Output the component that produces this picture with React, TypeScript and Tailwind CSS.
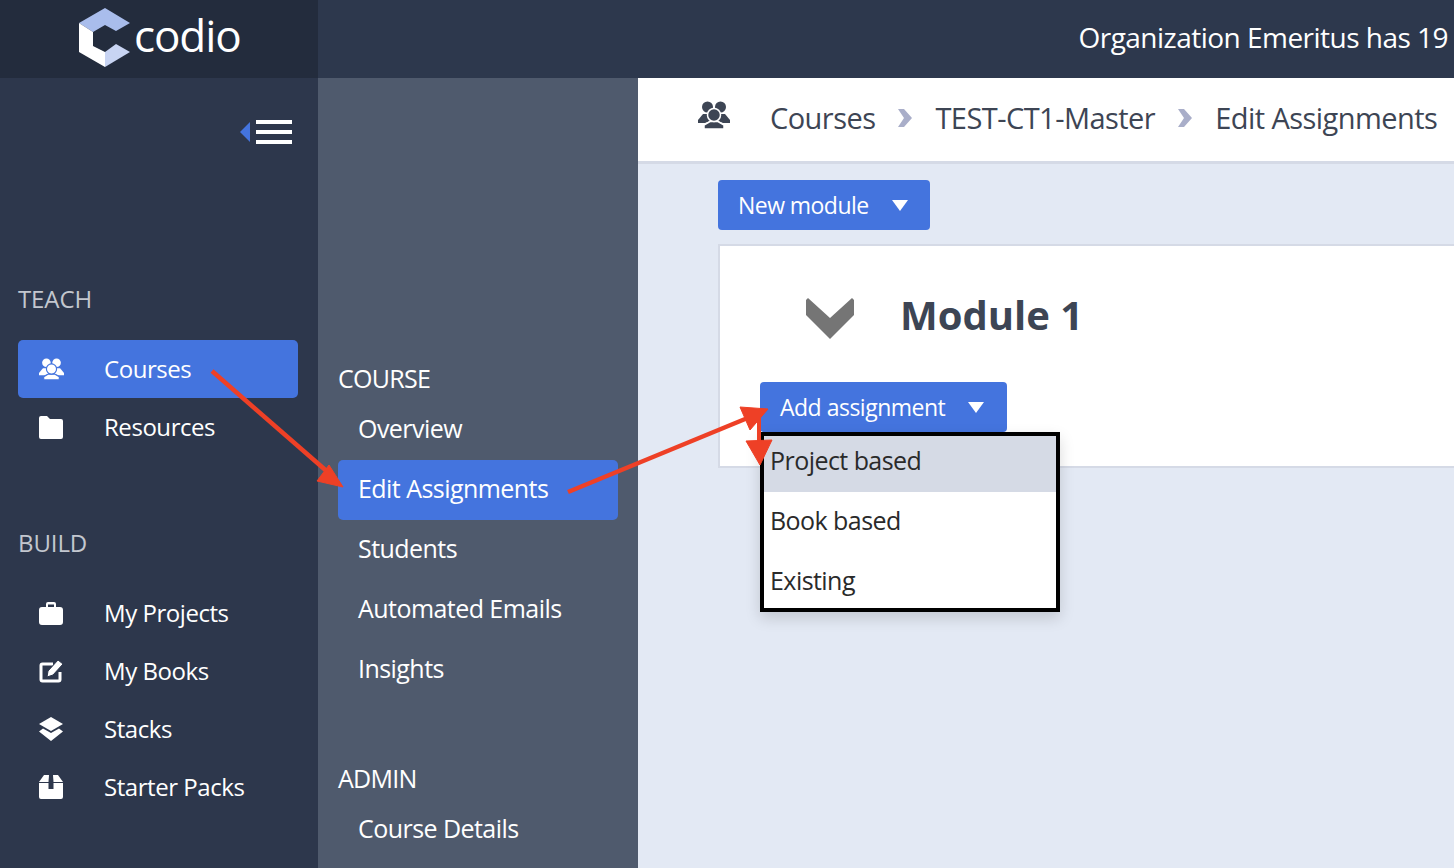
import type { ReactNode } from 'react';

function UsersIcon({ className, gap }: { className: string; gap: string }) {
  return (
    <svg viewBox="0 0 32 28" className={className} fill="currentColor">
      <circle cx="9.500" cy="6" r="5.500" />
      <circle cx="22.500" cy="6" r="5.500" />
      <path d="M0 19 5 13 10 13 12 20 7 22H0Z" />
      <path d="M32 19 27 13 22 13 20 20 25 22H32Z" />
      <path d="M6 28V24L12 20.500H20L26 24V28Z" stroke={gap} strokeWidth="1.500" />
      <circle cx="16" cy="14" r="6.500" stroke={gap} strokeWidth="1.500" />
    </svg>
  );
}

function FolderIcon() {
  return (
    <svg viewBox="0 0 24 23" className="w-[24px] h-[23px]" fill="currentColor">
      <path d="M0 2a2 2 0 0 1 2-2h6l3 3h11a2 2 0 0 1 2 2v16a2 2 0 0 1-2 2H2a2 2 0 0 1-2-2Z" />
    </svg>
  );
}

function BriefcaseIcon() {
  return (
    <svg viewBox="0 0 24 23" className="w-[24px] h-[23px]" fill="currentColor">
      <path fillRule="evenodd" d="M7 5V2a2 2 0 0 1 2-2h6a2 2 0 0 1 2 2v3h4a3 3 0 0 1 3 3v12a3 3 0 0 1-3 3H3a3 3 0 0 1-3-3V8a3 3 0 0 1 3-3ZM9 5h6V2.500H9Z" />
    </svg>
  );
}

function EditIcon() {
  return (
    <svg viewBox="0 0 25 24" className="w-[25px] h-[24px]" fill="currentColor">
      <path d="M21 13v7.500a1.500 1.500 0 0 1-1.500 1.500H3.500A1.500 1.500 0 0 1 2 20.500V6.500A1.500 1.500 0 0 1 3.500 5H14" fill="none" stroke="currentColor" strokeWidth="3" />
      <path d="M19 1 24 5 14 16 8 18 9 12Z" stroke="#2d374c" strokeWidth="1" />
    </svg>
  );
}

function StacksIcon() {
  return (
    <svg viewBox="0 0 24 24" className="w-[24px] h-[24px]" fill="currentColor">
      <path d="M12 0 24 7 12 14 0 7Z" />
      <path d="M4 11.500 12 16 20 11.500 24 14.500 12 24 0 14.500Z" />
    </svg>
  );
}

function BoxIcon() {
  return (
    <svg viewBox="0 0 24 24" className="w-[24px] h-[24px]" fill="currentColor">
      <path d="M5 0H10L9.500 7H0Z" />
      <path d="M19 0H14L14.500 7H24Z" />
      <path d="M0 8H9.500V14H14.500V8H24V22a2 2 0 0 1-2 2H2a2 2 0 0 1-2-2Z" />
    </svg>
  );
}

function Logo() {
  return (
    <div className="h-[78px] w-[318px] shrink-0 bg-[#232c3d] flex items-start pl-[79px] pt-[8px]">
      <svg viewBox="0 0 52 60" className="w-[52px] h-[60px] shrink-0">
        <path d="M0 15 26 0 51 15 37 23 26 17 14 24Z" fill="#a9bdec" />
        <path d="M0 15 14 24V38L26 44V59L0 44Z" fill="#ffffff" />
        <path d="M26 44 37 36 51 44 26 59Z" fill="#c8d4f3" />
      </svg>
      <span className="ml-[3px] mt-[1px] text-[44px] leading-[52px] font-medium text-white tracking-[-1.1px]">codio</span>
    </div>
  );
}

function SideItem({ icon, label, active }: { icon: ReactNode; label: string; active?: boolean }) {
  return (
    <div className={`h-[58px] w-[280px] rounded-[5px] flex items-center text-white ${active ? 'bg-[#4474de]' : ''}`}>
      <div className="w-[66px] flex justify-center shrink-0">{icon}</div>
      <span className="ml-[20px] text-[24px] tracking-[-0.45px]">{label}</span>
    </div>
  );
}

function SubItem({ label, active }: { label: string; active?: boolean }) {
  return (
    <div className={`h-[60px] w-[280px] rounded-[5px] flex items-center pl-[20px] pb-[2px] text-[25px] tracking-[-0.55px] text-white ${active ? 'bg-[#4474de]' : ''}`}>
      {label}
    </div>
  );
}

function Caret() {
  return <div className="w-0 h-0 border-l-[8px] border-r-[8px] border-t-[11px] border-l-transparent border-r-transparent border-t-white" />;
}

function Chevron() {
  return (
    <svg viewBox="0 0 14 18" className="w-[14px] h-[18px] mx-[23px] shrink-0" fill="#a9aec9">
      <path d="M0 0H6L14 9 6 18H0L6 9Z" />
    </svg>
  );
}

export default function App() {
  return (
    <div className="relative w-full h-[868px] overflow-hidden bg-[#e3e9f4] font-['Open_Sans',sans-serif]">
      {/* Top bar */}
      <header className="h-[78px] flex bg-[#2d384d]">
        <Logo />
        <div className="flex-1 flex items-center justify-end pr-[6px] pb-[4px] text-[28px] tracking-[-0.52px] text-white whitespace-nowrap">
          Organization Emeritus has 19
        </div>
      </header>

      <div className="flex h-[790px]">
        {/* Main nav */}
        <aside className="w-[318px] shrink-0 bg-[#2d374c] pl-[18px]">
          <div className="h-[205px] flex items-start justify-end pr-[26px] pt-[42px] gap-[6px]">
            <div className="mt-[2px] w-0 h-0 border-t-[10px] border-b-[10px] border-r-[10px] border-t-transparent border-b-transparent border-r-[#4474de]" />
            <div className="flex flex-col gap-[6px]">
              <div className="w-[36px] h-[4px] bg-white" />
              <div className="w-[36px] h-[4px] bg-white" />
              <div className="w-[36px] h-[4px] bg-white" />
            </div>
          </div>
          <div className="h-[32px] leading-[32px] text-[24px] tracking-[-0.1px] text-[#c3c7cf] mb-[25px]">TEACH</div>
          <SideItem active label="Courses" icon={<UsersIcon gap="#4474de" className="w-[25px] h-[22px]" />} />
          <SideItem label="Resources" icon={<FolderIcon />} />
          <div className="h-[32px] leading-[32px] mt-[71px] mb-[25px] text-[24px] tracking-[-0.1px] text-[#c3c7cf]">BUILD</div>
          <SideItem label="My Projects" icon={<BriefcaseIcon />} />
          <SideItem label="My Books" icon={<EditIcon />} />
          <SideItem label="Stacks" icon={<StacksIcon />} />
          <SideItem label="Starter Packs" icon={<BoxIcon />} />
        </aside>

        {/* Course nav */}
        <nav className="w-[320px] shrink-0 bg-[#4f5a6d] pl-[20px] pt-[285px]">
          <div className="h-[32px] leading-[32px] -mt-[1px] text-[25px] tracking-[-0.7px] text-white mb-[6px]">COURSE</div>
          <SubItem label="Overview" />
          <SubItem active label="Edit Assignments" />
          <SubItem label="Students" />
          <SubItem label="Automated Emails" />
          <SubItem label="Insights" />
          <div className="h-[32px] leading-[32px] mt-[62px] text-[25px] tracking-[-0.7px] text-white mb-[6px]">ADMIN</div>
          <SubItem label="Course Details" />
        </nav>

        {/* Content */}
        <main className="flex-1 min-w-0">
          <div className="h-[86px] bg-white border-b-[3px] border-[#d5dae6] flex items-center pl-[60px] pb-[3px] text-[29px] tracking-[-0.55px] text-[#3d4554] whitespace-nowrap">
            <UsersIcon gap="#ffffff" className="w-[32px] h-[28px] shrink-0 -mt-[6px] mr-[40px]" />
            <span>Courses</span>
            <Chevron />
            <span>TEST-CT1-Master</span>
            <Chevron />
            <span>Edit Assignments</span>
          </div>
          <div className="pl-[80px] pt-[16px]">
            <div className="h-[50px] w-[212px] rounded-[4px] bg-[#4474de] flex items-center pl-[20px] text-[23px] tracking-[-0.55px] text-white">
              <span className="mr-[23px]">New module</span>
              <Caret />
            </div>
            <section className="mt-[14px] h-[224px] border-2 border-[#d5dae6] border-r-0 bg-white pl-[40px] pt-[136px] relative">
              <svg viewBox="0 0 48 41" className="absolute left-[86px] top-[52px] w-[48px] h-[41px]" fill="#757575">
                <path d="M0 2 2 0 24 20 46 0 48 2V17L24 41 0 17Z" />
              </svg>
              <h1 className="absolute left-[180px] top-[42px] text-[40px] leading-[54px] font-bold text-[#3d4554] whitespace-nowrap">Module 1</h1>
              <div className="relative w-[247px]">
                <div className="h-[50px] w-[247px] rounded-[4px] bg-[#4474de] flex items-center pl-[20px] text-[23px] tracking-[-0.5px] text-white">
                  <span className="mr-[23px]">Add assignment</span>
                  <Caret />
                </div>
                <div className="absolute left-0 top-[50px] w-[300px] h-[180px] border-4 border-black bg-white text-[25px] tracking-[-0.55px] text-[#2a2a2a] shadow-[0_6px_14px_rgba(0,0,0,0.15)] z-10">
                  <div className="h-[56px] bg-[#d5dae5] pl-[6px] flex items-center pb-[6px]">Project based</div>
                  <div className="h-[60px] pl-[6px] flex items-center pb-[2px]">Book based</div>
                  <div className="h-[56px] pl-[6px] flex items-center pt-[2px]">Existing</div>
                </div>
              </div>
            </section>
          </div>
        </main>
      </div>

      {/* Red annotation arrows */}
      <svg className="absolute left-0 top-0 w-[1454px] h-[868px] pointer-events-none z-20" viewBox="0 0 1454 868">
        <g fill="#ee4026" stroke="#ee4026">
          <path d="M212 371 330 474" strokeWidth="4.500" fill="none" />
          <path d="M343 487 317 481 329 465Z" strokeWidth="1" />
          <path d="M568 492 750 417" strokeWidth="4.500" fill="none" />
          <path d="M768 409 740 407 750 430Z" strokeWidth="1" />
          <path d="M759 410V445" strokeWidth="4" fill="none" />
          <path d="M760 465 746 441 772 440Z" strokeWidth="1" />
        </g>
      </svg>
    </div>
  );
}
